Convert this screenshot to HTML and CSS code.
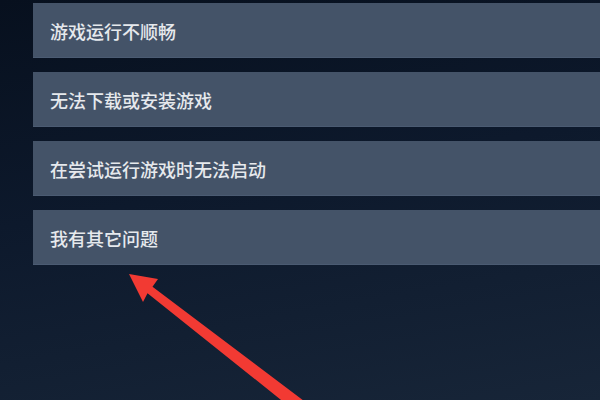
FILE: index.html
```html
<!DOCTYPE html>
<html lang="zh-CN">
<head>
<meta charset="utf-8">
<link rel="stylesheet" href="styles.css">
</head>
<body>
<main class="page">
  <ul class="options">
    <li class="option">游戏运行不顺畅</li>
    <li class="option">无法下载或安装游戏</li>
    <li class="option">在尝试运行游戏时无法启动</li>
    <li class="option">我有其它问题</li>
  </ul>
  <svg class="arrow" width="600" height="400" viewBox="0 0 600 400" aria-hidden="true">
    <polygon fill="#f23a33" points="129,274 158,279 152.5,286.8 315.3,409.5 306.7,420.5 147.5,293.2 143,302"/>
  </svg>
</main>
</body>
</html>
```
FILE: styles.css
```css
* { box-sizing: border-box; }
html, body {
  margin: 0;
  padding: 0;
  width: 600px;
  height: 400px;
  overflow: hidden;
}
body {
  background: linear-gradient(170deg, #07101e 0%, #0d192c 45%, #172538 100%);
  font-family: "Noto Sans CJK SC", "Noto Sans", sans-serif;
}
.page {
  position: relative;
  width: 600px;
  height: 400px;
  padding: 3px 0 0 33px;
}
.options {
  list-style: none;
  margin: 0;
  padding: 0;
  display: flex;
  flex-direction: column;
  gap: 14px;
}
.option {
  height: 55px;
  background: #445368;
  border-bottom: 1px solid #4b5b72;
  color: #e6e9ed;
  font-size: 18px;
  font-weight: 500;
  display: flex;
  align-items: center;
  padding: 2px 0 0 17px;
}
.arrow {
  position: absolute;
  left: 0;
  top: 0;
}
```
